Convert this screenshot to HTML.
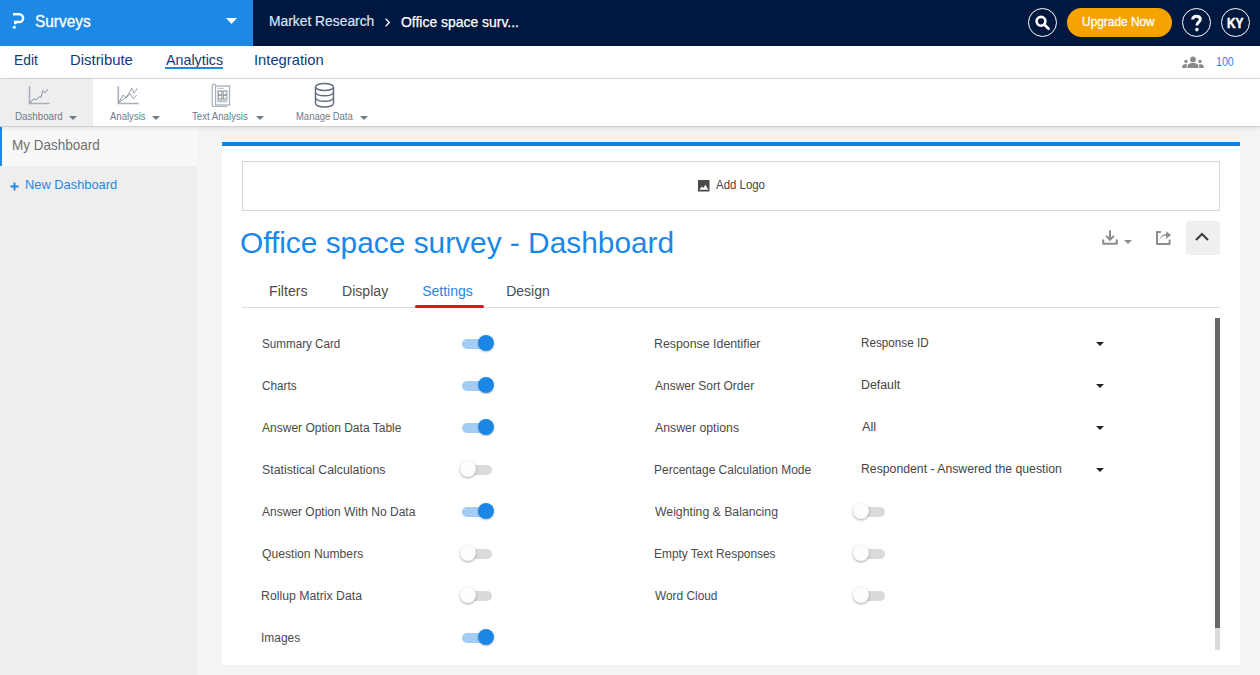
<!DOCTYPE html>
<html><head><meta charset="utf-8">
<style>
*{box-sizing:border-box;margin:0;padding:0}
html,body{width:1260px;height:675px;overflow:hidden;background:#f4f4f4;font-family:"Liberation Sans",sans-serif;position:relative}
.a{position:absolute}
.t{position:absolute;white-space:nowrap;line-height:1}
svg{position:absolute;overflow:visible}
.tr{position:absolute;width:30px;height:10px;border-radius:5px}
.kn{position:absolute;width:16px;height:16px;border-radius:50%}
</style></head><body>
<div class="a" style="left:0;top:0;width:1260px;height:46px;background:#00173f"></div>
<div class="a" style="left:0;top:0;width:253px;height:46px;background:#1e88e5"></div>
<svg style="left:12px;top:13px" width="13" height="16" viewBox="0 0 13 16"><path d="M1 1.3H7.2A3.9 3.9 0 0 1 7.2 9.1H3.2V11.3" fill="none" stroke="#fff" stroke-width="2.5"/><circle cx="2.3" cy="14.3" r="1.5" fill="#fff"/></svg>
<div class="t" style="left:35.10px;top:14px;font-size:16px;color:#fff;transform:scaleX(0.9637);transform-origin:0.00px 0;-webkit-text-stroke:0.3px #fff">Surveys</div>
<svg style="left:226px;top:18px" width="11" height="6" viewBox="0 0 11 6"><path d="M0 0H11L5.5 6Z" fill="#fff"/></svg>
<div class="t" style="left:268.50px;top:14px;font-size:14px;color:#d8e6f4;transform:scaleX(0.9875);transform-origin:1.00px 0;-webkit-text-stroke:0.2px #d8e6f4">Market Research</div>
<svg style="left:385px;top:17.5px" width="5" height="9" viewBox="0 0 5 9"><path d="M0.6 0.6L4.2 4.5L0.6 8.4" fill="none" stroke="#fff" stroke-width="1.4"/></svg>
<div class="t" style="left:401.20px;top:15px;font-size:14.5px;color:#fff;transform:scaleX(0.9611);transform-origin:0.00px 0;-webkit-text-stroke:0.25px #fff">Office space surv...</div>
<div class="a" style="left:1028px;top:8px;width:29px;height:29px;border:1.2px solid #fff;border-radius:50%"></div>
<svg style="left:1034px;top:14px" width="16" height="16" viewBox="0 0 16 16"><circle cx="7" cy="7.3" r="4.4" fill="none" stroke="#fff" stroke-width="2.6"/><path d="M10 10.3L14.6 14.8" stroke="#fff" stroke-width="2.6" stroke-linecap="round"/></svg>
<div class="a" style="left:1067px;top:8px;width:105px;height:29px;background:#f6a300;border-radius:14.5px"></div>
<div class="t" style="left:1082.00px;top:15px;font-size:13px;color:#fff;transform:scaleX(0.9128);transform-origin:1.00px 0;-webkit-text-stroke:0.3px #fff">Upgrade Now</div>
<div class="a" style="left:1182px;top:8px;width:29px;height:29px;border:1.2px solid #fff;border-radius:50%"></div>
<svg style="left:1191px;top:15px" width="11" height="17" viewBox="0 0 11 17"><path d="M1.6 4.6C1.6 2.3 3.3 1.3 5.4 1.3C7.6 1.3 9.3 2.5 9.3 4.5C9.3 6.9 6 7.3 6 10V10.6" fill="none" stroke="#fff" stroke-width="2.9"/><circle cx="5.9" cy="14.6" r="1.8" fill="#fff"/></svg>
<div class="a" style="left:1221px;top:8px;width:29px;height:29px;border:1.2px solid #fff;border-radius:50%"></div>
<div class="t" style="left:1227.00px;top:16px;font-size:14px;color:#fff;font-weight:bold;transform:scaleX(0.8453);transform-origin:0.00px 0;-webkit-text-stroke:0.5px #fff">KY</div>
<div class="a" style="left:0;top:46px;width:1260px;height:33px;background:#fff;border-bottom:1px solid #d9d9d9"></div>
<div class="t" style="left:14.00px;top:52px;font-size:15px;color:#133a78;transform:scaleX(0.9190);transform-origin:1.00px 0">Edit</div>
<div class="t" style="left:70.40px;top:52px;font-size:15px;color:#133a78;transform:scaleX(0.9917);transform-origin:1.00px 0">Distribute</div>
<div class="t" style="left:165.70px;top:52px;font-size:15px;color:#133a78;transform:scaleX(0.9509);transform-origin:0.00px 0">Analytics</div>
<div class="a" style="left:165px;top:67px;width:58px;height:2px;background:#1e88e5"></div>
<div class="t" style="left:254.00px;top:52px;font-size:15px;color:#133a78;transform:scaleX(0.9821);transform-origin:1.00px 0">Integration</div>
<svg style="left:1182px;top:56px" width="22" height="12" viewBox="0 0 22 12"><circle cx="11" cy="3.4" r="2.9" fill="#8a8a8a"/><path d="M5.5 12V10.2C5.5 8 8 7 11 7C14 7 16.5 8 16.5 10.2V12Z" fill="#8a8a8a"/><circle cx="4" cy="5.4" r="1.7" fill="#8a8a8a"/><circle cx="18" cy="5.4" r="1.7" fill="#8a8a8a"/><path d="M0.2 12V10.6C0.2 9 1.7 8 4.8 8L4.6 12Z" fill="#8a8a8a"/><path d="M21.8 12V10.6C21.8 9 20.3 8 17.2 8L17.4 12Z" fill="#8a8a8a"/></svg>
<div class="t" style="left:1216.10px;top:56px;font-size:12.5px;color:#1e88e5;transform:scaleX(0.8515);transform-origin:0.00px 0">100</div>
<div class="a" style="left:0;top:126px;width:197px;height:549px;background:#eeeeee"></div>
<div class="a" style="left:0;top:126px;width:197px;height:40px;background:#f8f8f8;border-left:2px solid #1e88e5"></div>
<div class="t" style="left:12.00px;top:137px;font-size:15px;color:#6f6f6f;transform:scaleX(0.8992);transform-origin:1.00px 0">My Dashboard</div>
<svg style="left:10px;top:181.5px" width="9" height="9" viewBox="0 0 9 9"><path d="M0.5 4.5H8.5M4.5 0.5V8.5" stroke="#1e88e5" stroke-width="1.9"/></svg>
<div class="t" style="left:24.60px;top:178px;font-size:13.5px;color:#1e88e5;transform:scaleX(0.9518);transform-origin:1.00px 0">New Dashboard</div>
<div class="a" style="left:0;top:79px;width:1260px;height:48px;background:#fff;border-bottom:1px solid #d0d0d0;box-shadow:0 1px 4px rgba(0,0,0,0.10)"></div>
<div class="a" style="left:0;top:79px;width:93px;height:47px;background:#eeeeee"></div>
<svg style="left:0;top:0" width="1" height="1"><path d="M29.5 86.3V103.5H49.6" fill="none" stroke="#a9b0ba" stroke-width="1.6"/><path d="M29.8 103L33.7 98.8L36.1 99.8L39.7 96.4L40.9 97.4L42.9 90.7L45.2 92.7L48 89.1" fill="none" stroke="#7a828f" stroke-width="0.9"/></svg>
<svg style="left:0;top:0" width="1" height="1"><path d="M118.3 86.3V103.5H138.7" fill="none" stroke="#a9b0ba" stroke-width="1.6"/><path d="M118.7 102.6L123 95.1L126.2 97.8L131.7 88.3L134.1 93.1L137.3 88.3" fill="none" stroke="#7a828f" stroke-width="0.8"/><path d="M118.7 102.6L126.2 97.4L130.2 93.9L133.3 98.6L136.5 95.1" fill="none" stroke="#7a828f" stroke-width="0.8"/></svg>
<svg style="left:0;top:0" width="1" height="1"><rect x="215.5" y="86" width="14" height="19" fill="none" stroke="#a9b0ba" stroke-width="1.3"/><path d="M216 85.5C216 84.5 215 84.2 214 84.2C213 84.2 212.2 84.8 212.2 85.8V104.5C212.2 105.8 213 106.5 214 106.5H227" fill="none" stroke="#a9b0ba" stroke-width="1.2"/><path d="M217.5 88.3H223.7" stroke="#9aa0aa" stroke-width="0.8"/><rect x="217" y="90" width="10.5" height="11" fill="#c5c9cf"/><g fill="#fff" stroke="#858b95" stroke-width="0.6"><rect x="218.3" y="91.2" width="3.4" height="3.2"/><rect x="223.4" y="91.2" width="3.4" height="3.2"/><rect x="218.3" y="95.6" width="3.4" height="3.2"/><rect x="223.4" y="95.6" width="3.4" height="3.2"/></g><path d="M217.5 101.8H227" stroke="#aab0b8" stroke-width="1"/></svg>
<svg style="left:0;top:0" width="1" height="1"><g fill="none" stroke="#5f6b7a" stroke-width="1.4"><ellipse cx="324.5" cy="87" rx="9" ry="3.5"/><path d="M315.5 87V103.5C315.5 105.5 319.5 107 324.5 107C329.5 107 333.5 105.5 333.5 103.5V87"/><path d="M315.5 92.3C315.5 94.3 319.5 95.8 324.5 95.8C329.5 95.8 333.5 94.3 333.5 92.3"/><path d="M315.5 97.8C315.5 99.8 319.5 101.3 324.5 101.3C329.5 101.3 333.5 99.8 333.5 97.8"/></g></svg>
<div class="t" style="left:14.70px;top:111px;font-size:11px;color:#6f7b8b;transform:scaleX(0.8865);transform-origin:0.00px 0">Dashboard</div>
<div class="t" style="left:109.50px;top:111px;font-size:11px;color:#6f7b8b;transform:scaleX(0.8683);transform-origin:0.00px 0">Analysis</div>
<div class="t" style="left:192.40px;top:111px;font-size:11px;color:#6f7b8b;transform:scaleX(0.8765);transform-origin:0.00px 0">Text Analysis</div>
<div class="t" style="left:296.00px;top:111px;font-size:11px;color:#6f7b8b;transform:scaleX(0.8592);transform-origin:0.00px 0">Manage Data</div>
<svg style="left:69px;top:116px" width="8" height="4" viewBox="0 0 8 4"><path d="M0 0H8L4 4Z" fill="#6f7b8b"/></svg>
<svg style="left:152px;top:116px" width="8" height="4" viewBox="0 0 8 4"><path d="M0 0H8L4 4Z" fill="#6f7b8b"/></svg>
<svg style="left:256.3px;top:116px" width="8" height="4" viewBox="0 0 8 4"><path d="M0 0H8L4 4Z" fill="#6f7b8b"/></svg>
<svg style="left:360.2px;top:116px" width="8" height="4" viewBox="0 0 8 4"><path d="M0 0H8L4 4Z" fill="#6f7b8b"/></svg>
<div class="a" style="left:222px;top:142px;width:1018px;height:523px;background:#fff"></div>
<div class="a" style="left:222px;top:142px;width:1018px;height:4px;background:#0a84e6"></div>
<div class="a" style="left:242px;top:161px;width:978px;height:50px;border:1px solid #d6d6d6"></div>
<svg style="left:698px;top:180px" width="12" height="12" viewBox="0 0 12 12"><rect x="0" y="0" width="11.5" height="11.5" rx="0.6" fill="#4a4a4a"/><path d="M1.3 9.7L3.8 6.6L5.2 8L7.5 4.8L10.3 9.7Z" fill="#fff"/></svg>
<div class="t" style="left:716.40px;top:179px;font-size:12.5px;color:#444;transform:scaleX(0.9147);transform-origin:0.00px 0">Add Logo</div>
<div class="t" style="left:239.60px;top:229px;font-size:29px;color:#1a88e6;transform:scaleX(1.0294);transform-origin:1.00px 0">Office space survey - Dashboard</div>
<svg style="left:1102px;top:230px" width="16" height="15" viewBox="0 0 16 15"><path d="M8 0.2V9.6M4.1 5.9L8 9.8L11.9 5.9" fill="none" stroke="#8c8c8c" stroke-width="2"/><path d="M1.2 10.4V13.8H14.8V10.4" fill="none" stroke="#8c8c8c" stroke-width="2.1" stroke-linejoin="round" stroke-linecap="round"/></svg>
<svg style="left:1124px;top:240px" width="8" height="4" viewBox="0 0 8 4"><path d="M0 0H8L4 4Z" fill="#8c8c8c"/></svg>
<svg style="left:1156px;top:231px" width="15" height="14" viewBox="0 0 15 14"><path d="M4.2 0.9H1V12.9H13.6V9.6" fill="none" stroke="#8c8c8c" stroke-width="2" stroke-linejoin="round" stroke-linecap="round"/><path d="M3.6 10.6C3.8 6.6 6.4 4.8 10.2 4.8V7.9L15 4.1L10.2 0.2V2.9C5.8 3.1 3.4 6.5 3.6 10.6Z" fill="#8c8c8c"/></svg>
<div class="a" style="left:1186px;top:221px;width:34px;height:34px;background:#efefef;border-radius:3px"></div>
<svg style="left:1195px;top:232px" width="14" height="9" viewBox="0 0 14 9"><path d="M1 8L7 2L13 8" fill="none" stroke="#3c3c3c" stroke-width="2.1"/></svg>
<div class="a" style="left:242px;top:307px;width:978px;height:1px;background:#dcdcdc"></div>
<div class="t" style="left:268.60px;top:284px;font-size:14px;color:#4c4c4c;transform:scaleX(1.0132);transform-origin:1.00px 0">Filters</div>
<div class="t" style="left:341.50px;top:284px;font-size:14px;color:#4c4c4c;transform:scaleX(1.0066);transform-origin:1.00px 0">Display</div>
<div class="t" style="left:422.20px;top:284px;font-size:14px;color:#1e88e5">Settings</div>
<div class="t" style="left:506.20px;top:284px;font-size:14px;color:#4c4c4c">Design</div>
<div class="a" style="left:414.5px;top:305.2px;width:69px;height:3px;background:#e8111b;border-radius:1.5px"></div>
<div class="t" style="left:262.20px;top:338px;font-size:12.5px;color:#4a4a4a;transform:scaleX(0.9323);transform-origin:0.00px 0">Summary Card</div>
<div class="tr" style="left:462px;top:338.5px;background:#a3cdf4"></div>
<div class="kn" style="left:478px;top:335px;background:#1b86e6;box-shadow:0 1px 2px rgba(0,0,0,0.25)"></div>
<div class="t" style="left:262.20px;top:380px;font-size:12.5px;color:#4a4a4a;transform:scaleX(0.9380);transform-origin:0.00px 0">Charts</div>
<div class="tr" style="left:462px;top:380.5px;background:#a3cdf4"></div>
<div class="kn" style="left:478px;top:377px;background:#1b86e6;box-shadow:0 1px 2px rgba(0,0,0,0.25)"></div>
<div class="t" style="left:262.20px;top:422px;font-size:12.5px;color:#4a4a4a;transform:scaleX(0.9617);transform-origin:0.00px 0">Answer Option Data Table</div>
<div class="tr" style="left:462px;top:422.5px;background:#a3cdf4"></div>
<div class="kn" style="left:478px;top:419px;background:#1b86e6;box-shadow:0 1px 2px rgba(0,0,0,0.25)"></div>
<div class="t" style="left:262.20px;top:464px;font-size:12.5px;color:#4a4a4a;transform:scaleX(0.9871);transform-origin:0.00px 0">Statistical Calculations</div>
<div class="tr" style="left:462px;top:464.5px;background:#dadada"></div>
<div class="kn" style="left:460px;top:461.2px;background:#fdfdfd;box-shadow:0 1px 2.5px rgba(0,0,0,0.35)"></div>
<div class="t" style="left:262.20px;top:506px;font-size:12.5px;color:#4a4a4a;transform:scaleX(0.9598);transform-origin:0.00px 0">Answer Option With No Data</div>
<div class="tr" style="left:462px;top:506.5px;background:#a3cdf4"></div>
<div class="kn" style="left:478px;top:503px;background:#1b86e6;box-shadow:0 1px 2px rgba(0,0,0,0.25)"></div>
<div class="t" style="left:262.20px;top:548px;font-size:12.5px;color:#4a4a4a;transform:scaleX(0.9715);transform-origin:0.00px 0">Question Numbers</div>
<div class="tr" style="left:462px;top:548.5px;background:#dadada"></div>
<div class="kn" style="left:460px;top:545.2px;background:#fdfdfd;box-shadow:0 1px 2.5px rgba(0,0,0,0.35)"></div>
<div class="t" style="left:261.20px;top:590px;font-size:12.5px;color:#4a4a4a;transform:scaleX(0.9817);transform-origin:1.00px 0">Rollup Matrix Data</div>
<div class="tr" style="left:462px;top:590.5px;background:#dadada"></div>
<div class="kn" style="left:460px;top:587.2px;background:#fdfdfd;box-shadow:0 1px 2.5px rgba(0,0,0,0.35)"></div>
<div class="t" style="left:261.20px;top:632px;font-size:12.5px;color:#4a4a4a;transform:scaleX(0.9562);transform-origin:1.00px 0">Images</div>
<div class="tr" style="left:462px;top:632.5px;background:#a3cdf4"></div>
<div class="kn" style="left:478px;top:629px;background:#1b86e6;box-shadow:0 1px 2px rgba(0,0,0,0.25)"></div>
<div class="t" style="left:654.20px;top:338px;font-size:12.5px;color:#4a4a4a;transform:scaleX(0.9884);transform-origin:1.00px 0">Response Identifier</div>
<div class="t" style="left:861.40px;top:337px;font-size:12.5px;color:#444;transform:scaleX(0.9350);transform-origin:1.00px 0">Response ID</div>
<svg style="left:1096px;top:342px" width="8" height="4" viewBox="0 0 8 4"><path d="M0 0H8L4 4Z" fill="#222"/></svg>
<div class="t" style="left:655.20px;top:380px;font-size:12.5px;color:#4a4a4a;transform:scaleX(0.9580);transform-origin:0.00px 0">Answer Sort Order</div>
<div class="t" style="left:861.40px;top:379px;font-size:12.5px;color:#444;transform:scaleX(0.9864);transform-origin:1.00px 0">Default</div>
<svg style="left:1096px;top:384px" width="8" height="4" viewBox="0 0 8 4"><path d="M0 0H8L4 4Z" fill="#222"/></svg>
<div class="t" style="left:655.20px;top:422px;font-size:12.5px;color:#4a4a4a;transform:scaleX(0.9834);transform-origin:0.00px 0">Answer options</div>
<div class="t" style="left:862.40px;top:421px;font-size:12.5px;color:#444;transform:scaleX(1.0141);transform-origin:0.00px 0">All</div>
<svg style="left:1096px;top:426px" width="8" height="4" viewBox="0 0 8 4"><path d="M0 0H8L4 4Z" fill="#222"/></svg>
<div class="t" style="left:654.20px;top:464px;font-size:12.5px;color:#4a4a4a;transform:scaleX(0.9581);transform-origin:1.00px 0">Percentage Calculation Mode</div>
<div class="t" style="left:861.40px;top:463px;font-size:12.5px;color:#444;transform:scaleX(0.9793);transform-origin:1.00px 0">Respondent - Answered the question</div>
<svg style="left:1096px;top:468px" width="8" height="4" viewBox="0 0 8 4"><path d="M0 0H8L4 4Z" fill="#222"/></svg>
<div class="t" style="left:654.80px;top:506px;font-size:12.5px;color:#4a4a4a;transform:scaleX(0.9794);transform-origin:0.00px 0">Weighting &amp; Balancing</div>
<div class="tr" style="left:855px;top:506.5px;background:#dadada"></div>
<div class="kn" style="left:853px;top:503.2px;background:#fdfdfd;box-shadow:0 1px 2.5px rgba(0,0,0,0.35)"></div>
<div class="t" style="left:653.80px;top:548px;font-size:12.5px;color:#4a4a4a;transform:scaleX(0.9520);transform-origin:1.00px 0">Empty Text Responses</div>
<div class="tr" style="left:855px;top:548.5px;background:#dadada"></div>
<div class="kn" style="left:853px;top:545.2px;background:#fdfdfd;box-shadow:0 1px 2.5px rgba(0,0,0,0.35)"></div>
<div class="t" style="left:654.80px;top:590px;font-size:12.5px;color:#4a4a4a;transform:scaleX(0.9496);transform-origin:0.00px 0">Word Cloud</div>
<div class="tr" style="left:855px;top:590.5px;background:#dadada"></div>
<div class="kn" style="left:853px;top:587.2px;background:#fdfdfd;box-shadow:0 1px 2.5px rgba(0,0,0,0.35)"></div>
<div class="a" style="left:1215px;top:318px;width:5px;height:332px;background:#dadada"></div>
<div class="a" style="left:1215px;top:318px;width:5px;height:310px;background:#686868"></div>
</body></html>
